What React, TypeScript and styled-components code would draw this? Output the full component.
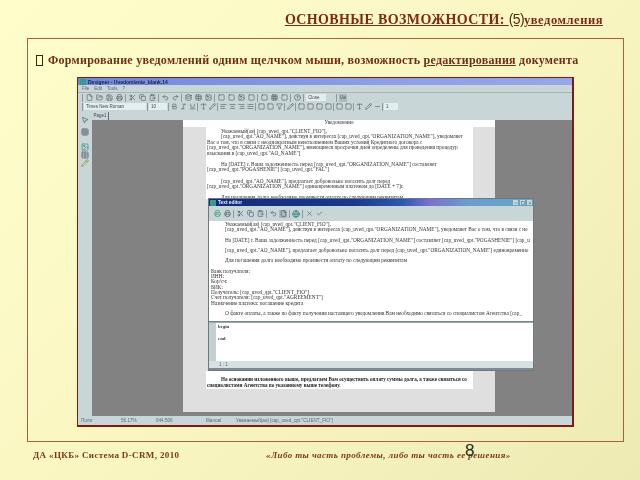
import React from "react";
import styled, { createGlobalStyle } from "styled-components";
import {
  File, FolderOpen, Save, Printer, Scissors, Copy, ClipboardPaste, Undo2, Redo2, Database, Table, Image,
  Grid3x3, Filter, Bold, Italic, Underline, AlignLeft, AlignCenter, AlignRight, AlignJustify, Pencil, Type,
  MousePointer2, Square, Globe, X, Check, Minus, HelpCircle,
} from "lucide-react";

const Global = createGlobalStyle`
  html, body { margin: 0; padding: 0; width: 640px; height: 480px; overflow: hidden; }
`;

const Slide = styled.div`
  position: relative;
  width: 640px;
  height: 480px;
  display: flex;
  flex-direction: column;
  overflow: hidden;
  background: linear-gradient(135deg, #fffecb 0%, #f9f6c2 50%, #eeeab4 100%);
  font-family: "Liberation Serif", serif;
`;

const Header = styled.header`
  height: 38px;
  box-sizing: border-box;
  padding: 11px 37px 0 0;
  display: flex;
  justify-content: flex-end;
  align-items: flex-start;
`;

const Title = styled.h1`
  margin: 0;
  font-size: 14px;
  line-height: 16px;
  font-weight: bold;
  color: #7c2a16;
  text-decoration: underline;
  white-space: nowrap;
  letter-spacing: 0.38px;
  filter: blur(0.3px);
`;

const TitleNum = styled.span`
  font-family: "Liberation Sans", sans-serif;
  font-size: 14px;
  font-weight: normal;
  letter-spacing: -0.6px;
  color: #4c3010;
`;

const TitleSmall = styled.span`
  font-size: 12.5px;
  letter-spacing: 0.55px;
`;

const Frame = styled.section`
  width: 597px;
  height: 404px;
  margin-left: 27px;
  box-sizing: border-box;
  border: 1px solid #a8613f;
  padding: 14px 0 0 8px;
`;

const Lead = styled.p`
  margin: 0;
  height: 24px;
  display: flex;
  align-items: flex-start;
  gap: 5px;
  font-size: 12px;
  line-height: 14px;
  font-weight: bold;
  color: #6d3015;
  white-space: nowrap;
  letter-spacing: 0.25px;
  filter: blur(0.25px);
`;

const Bullet = styled.span`
  width: 5px;
  height: 9px;
  margin-top: 2px;
  border: 1px solid #3b2408;
  flex: none;
`;

const Edit = styled.span`
  text-decoration: underline;
`;

const Shot = styled.div`
  position: relative;
  width: 497px;
  height: 350px;
  margin-left: 41px;
  box-sizing: border-box;
  border: 1px solid #7c1d12;
  border-width: 1px 2px 2px 1px;
  background: #c9d6d8;
  display: flex;
  flex-direction: column;
  overflow: hidden;
  font-family: "Liberation Sans", sans-serif;
  filter: blur(0.45px);
`;

const WinTitle = styled.div`
  height: 7px;
  flex: none;
  background: linear-gradient(90deg, #6f86dd, #8d9ee8 60%, #97a6ea);
  display: flex;
  align-items: center;
  gap: 2px;
  padding-left: 2px;
  font-size: 5px;
  font-weight: bold;
  color: #1c2440;
`;

const AppIcon = styled.span`
  width: 6px;
  height: 6px;
  background: #3c9a8c;
`;

const MenuBar = styled.div`
  height: 8px;
  box-sizing: border-box;
  flex: none;
  display: flex;
  align-items: center;
  gap: 5px;
  padding-left: 4px;
  font-size: 4.5px;
  color: #667;
  border-bottom: 1px solid #a9b6b8;
`;

const ToolRow = styled.div<{ $tight?: boolean }>`
  height: 9px;
  box-sizing: border-box;
  flex: none;
  padding-left: 4px;
  display: flex;
  align-items: center;
  gap: ${(p) => (p.$tight ? 1 : 2)}px;
  color: #4b5560;
  font-size: 4.5px;
`;

const Sep = styled.span`
  width: 1px;
  height: 8px;
  background: #8d999c;
  flex: none;
`;

const ToolBtn = styled.span<{ $active?: boolean }>`
  height: 8px;
  width: 8px;
  flex: none;
  display: inline-flex;
  align-items: center;
  justify-content: center;
  background: ${(p) => (p.$active ? "#aeb9bc" : "transparent")};
`;

const Combo = styled.span<{ $w: number }>`
  width: ${(p) => p.$w}px;
  height: 7px;
  flex: none;
  padding-left: 2px;
  box-sizing: border-box;
  background: #e4edef;
  display: inline-flex;
  align-items: center;
  font-size: 4.5px;
  color: #445;
`;

const Work = styled.div`
  flex: 1;
  min-height: 0;
  display: flex;
`;

const SideTools = styled.div`
  width: 14px;
  flex: none;
  box-sizing: border-box;
  padding: 5px 1px;
  display: flex;
  flex-direction: column;
  align-items: center;
  color: #556;
`;

const SideGap = styled.span<{ $h: number }>`
  height: ${(p) => p.$h}px;
  flex: none;
`;

const Desk = styled.div`
  flex: 1;
  min-width: 0;
  display: flex;
  flex-direction: column;
`;

const TabRow = styled.div`
  height: 9px;
  flex: none;
  display: flex;
  align-items: flex-end;
  font-size: 4.5px;
  color: #445;
`;

const Tab = styled.span`
  height: 8px;
  width: 17px;
  box-sizing: border-box;
  padding-top: 1px;
  text-align: center;
  border-right: 1px solid #667;
`;

const Canvas = styled.div`
  flex: 1;
  min-height: 0;
  background: #828282;
  padding-left: 91px;
  display: flex;
  align-items: flex-start;
`;

const Page = styled.div`
  width: 312px;
  height: 292px;
  background: #dfdfdf;
  display: flex;
  flex-direction: column;
`;

const PageHead = styled.div`
  height: 7px;
  flex: none;
  box-sizing: border-box;
  background: #fff;
  text-align: center;
  font-size: 5.2px;
  line-height: 5px;
  color: #333;
  font-family: "Liberation Serif", serif;
`;

const DocBox = styled.div`
  width: 267px;
  height: 72px;
  flex: none;
  margin-left: 23px;
  background: #fff;
  box-sizing: border-box;
  padding: 2px 0 0 1px;
  font-family: "Liberation Serif", serif;
  font-size: 5.3px;
  line-height: 5.4px;
  color: #333;
  white-space: nowrap;
`;

const DocLine = styled.div<{ $indent?: number; $gap?: number }>`
  padding-left: ${(p) => p.$indent ?? 0}px;
  margin-top: ${(p) => p.$gap ?? 0}px;
`;

const Spacer = styled.div`
  height: 172px;
  flex: none;
`;

const NoteBox = styled.div`
  width: 267px;
  height: 18px;
  flex: none;
  margin-left: 23px;
  background: #fff;
  box-sizing: border-box;
  padding: 5px 0 0 1px;
  font-family: "Liberation Serif", serif;
  font-size: 5.1px;
  line-height: 6px;
  font-weight: bold;
  color: #222;
  white-space: nowrap;
`;

const StatusBar = styled.div`
  height: 9px;
  flex: none;
  padding-left: 3px;
  display: flex;
  align-items: center;
  font-size: 4.6px;
  color: #5a6a80;
  white-space: nowrap;
`;

const Cell = styled.span<{ $w: number }>`
  width: ${(p) => p.$w}px;
  flex: none;
`;

/* Floating "Text editor" window above the designer page */
const Dialog = styled.div`
  position: absolute;
  left: 130px;
  top: 120px;
  width: 326px;
  height: 173px;
  box-sizing: border-box;
  border: 1px solid #6d7a7d;
  background: #c9d6d8;
  display: flex;
  flex-direction: column;
`;

const DlgTitle = styled.div`
  height: 7px;
  flex: none;
  display: flex;
  align-items: center;
  gap: 2px;
  padding: 0 1px;
  background: linear-gradient(90deg, #0f2a80 0%, #1a3a8c 45%, #2c58b5 60%, #7a70d0 68%, #6a9dd0 80%, #62a7c8 100%);
  color: #e8eefc;
  font-size: 4.8px;
  font-weight: bold;
`;

const DlgName = styled.span`
  flex: 1;
`;

const DlgBtn = styled.span`
  width: 5px;
  height: 5px;
  display: inline-flex;
  align-items: center;
  justify-content: center;
  background: #c9d6d8;
  color: #223;
`;

const DlgTools = styled.div`
  height: 15px;
  flex: none;
  padding-left: 4px;
  display: flex;
  align-items: center;
  gap: 2px;
  color: #3e5560;
`;

const DlgBody = styled.div`
  height: 101px;
  flex: none;
  background: #fff;
  box-sizing: border-box;
  padding: 1px 0 0 2px;
  font-family: "Liberation Serif", serif;
  font-size: 5.3px;
  line-height: 5.35px;
  color: #333;
  white-space: nowrap;
  border-bottom: 1px solid #788;
`;

const Code = styled.div`
  flex: 1;
  display: flex;
  border-top: 1px solid #9aa;
  min-height: 0;
`;

const Gutter = styled.div`
  width: 7px;
  flex: none;
  background: #c3d0d2;
`;

const CodeText = styled.div`
  flex: 1;
  background: #fff;
  padding: 1px 0 0 2px;
  font-family: "Liberation Serif", serif;
  font-size: 4.8px;
  line-height: 5.5px;
  font-weight: bold;
  color: #334;
`;

const CodeLine = styled.div<{ $gap?: boolean }>`
  margin-top: ${(p) => (p.$gap ? 6 : 0)}px;
`;

const DlgStatus = styled.div`
  height: 7px;
  flex: none;
  padding-left: 10px;
  background: #d5e1e3;
  font-size: 4.5px;
  line-height: 7px;
  color: #667;
  border-bottom: 2px solid #7f8b8e;
`;

const Footer = styled.footer`
  flex: 1;
  display: flex;
  align-items: flex-start;
  padding: 7px 0 0 33px;
  font-size: 9px;
  line-height: 12px;
  font-weight: bold;
  color: #7c3a1a;
  white-space: nowrap;
  filter: blur(0.25px);
`;

const Org = styled.span`
  width: 233px;
  letter-spacing: 0.37px;
  flex: none;
`;

const Motto = styled.span`
  font-style: italic;
  letter-spacing: 0.4px;
`;

const PageNo = styled.span`
  position: absolute;
  left: 465px;
  top: 441px;
  font-family: "Liberation Sans", sans-serif;
  font-size: 17px;
  line-height: 19px;
  color: #2c2c20;
`;

const S = 7;
const tools1 = [
  [File, FolderOpen, Save, Printer],
  [Scissors, Copy, ClipboardPaste],
  [Undo2, Redo2],
  [Database, Table, Image],
  [Square, Square, Image, Square],
  [Square, Grid3x3, Square],
];
const tools2 = [
  [Bold, Italic, Underline],
  [Type, Pencil],
  [AlignLeft, AlignCenter, AlignRight, AlignJustify],
  [Square, Square, Filter],
  [Pencil],
  [Square, Square, Square, Square],
  [Square, Square],
  [Type, Pencil, Minus],
];

const Icons = ({ groups }: { groups: (typeof File)[][] }) => (
  <>
    {groups.map((g, i) => (
      <React.Fragment key={i}>
        {g.map((I, j) => (
          <ToolBtn key={j}>
            <I size={S} strokeWidth={2} />
          </ToolBtn>
        ))}
        <Sep />
      </React.Fragment>
    ))}
  </>
);

export default function App() {
  return (
    <Slide>
      <Global />
      <Header>
        <Title>
          ОСНОВНЫЕ ВОЗМОЖНОСТИ: <TitleNum>(5)</TitleNum>
          <TitleSmall>уведомления</TitleSmall>
        </Title>
      </Header>
      <Frame>
        <Lead>
          <Bullet />
          <span>
            Формирование уведомлений одним щелчком мыши, возможность <Edit>редактирования</Edit> документа
          </span>
        </Lead>
        <Shot>
          <WinTitle>
            <AppIcon />
            Designer - Uvedomlenie_blank.14
          </WinTitle>
          <MenuBar>
            <span>File</span>
            <span>Edit</span>
            <span>Tools</span>
            <span>?</span>
          </MenuBar>
          <ToolRow>
            <Sep />
            <Icons groups={tools1} />
            <ToolBtn>
              <HelpCircle size={S} />
            </ToolBtn>
            <Sep />
            <Combo $w={20}>Close</Combo>
            <Cell $w={6} />
            <Sep />
            <ToolBtn $active>Ua</ToolBtn>
          </ToolRow>
          <ToolRow $tight>
            <Sep />
            <Combo $w={62}>Times New Roman</Combo>
            <Sep />
            <Combo $w={18}>10</Combo>
            <Sep />
            <Icons groups={tools2} />
            <Combo $w={14}>1</Combo>
          </ToolRow>
          <Work>
            <SideTools>
              <MousePointer2 size={8} />
              <SideGap $h={4} />
              <Grid3x3 size={8} />
              <SideGap $h={7} />
              <Image size={8} color="#2f8f7a" />
              <Table size={8} />
              <Pencil size={8} color="#9a8a20" />
            </SideTools>
            <Desk>
              <TabRow>
                <Tab>Page1</Tab>
              </TabRow>
              <Canvas>
                <Page>
                  <PageHead>Уведомление</PageHead>
                  <DocBox>
                    <DocLine $indent={14}>Уважаемый(ая) [cap_uved_qpt."CLIENT_FIO"],</DocLine>
                    <DocLine $indent={14}>[cap_uved_qpt."AO_NAME"], действуя в интересах [cap_uved_qpt."ORGANIZATION_NAME"], уведомляет</DocLine>
                    <DocLine>Вас о том, что в связи с неоднократным неисполнением Ваших условий Кредитного договора с</DocLine>
                    <DocLine>[cap_uved_qpt."ORGANIZATION_NAME"], имеющиеся просрочки дней определены для проведения процедур</DocLine>
                    <DocLine>взыскания в [cap_uved_qpt."AO_NAME"]</DocLine>
                    <DocLine $indent={14} $gap={6}>На [DATE] г. Ваша задолженность перед [cap_uved_qpt."ORGANIZATION_NAME"] составляет</DocLine>
                    <DocLine>[cap_uved_qpt."POGASHENIE"] [cap_uved_qpt."FAL"]</DocLine>
                    <DocLine $indent={14} $gap={6}>[cap_uved_qpt."AO_NAME"], предлагает добровольно погасить долг перед</DocLine>
                    <DocLine>[cap_uved_qpt."ORGANIZATION_NAME"] единовременным платежом до [DATE + 7]г.</DocLine>
                    <DocLine $indent={14} $gap={5}>Для погашения долга необходимо произвести оплату по следующим реквизитам</DocLine>
                  </DocBox>
                  <Spacer />
                  <NoteBox>
                    <DocLine $indent={14}>На основании изложенного выше, предлагаем Вам осуществить оплату суммы долга, а также связаться со</DocLine>
                    <DocLine>специалистами Агентства по указанному выше телефону.</DocLine>
                  </NoteBox>
                </Page>
              </Canvas>
            </Desk>
          </Work>
          <StatusBar>
            <Cell $w={40}>Поля</Cell>
            <Cell $w={35}>56.17%</Cell>
            <Cell $w={50}>644:506</Cell>
            <Cell $w={30}>Manual</Cell>
            <Cell $w={120}>Уважаемый(ая) [cap_uved_qpt."CLIENT_FIO"]</Cell>
          </StatusBar>
          <Dialog>
            <DlgTitle>
              <AppIcon />
              <DlgName>Text editor</DlgName>
              <DlgBtn>
                <Minus size={4} />
              </DlgBtn>
              <DlgBtn>
                <Square size={4} />
              </DlgBtn>
              <DlgBtn>
                <X size={4} />
              </DlgBtn>
            </DlgTitle>
            <DlgTools>
              <ToolBtn><Printer size={7} color="#2f8f7a" /></ToolBtn>
              <ToolBtn><Printer size={7} /></ToolBtn>
              <Sep />
              <ToolBtn><Scissors size={7} /></ToolBtn>
              <ToolBtn><Copy size={7} /></ToolBtn>
              <ToolBtn><ClipboardPaste size={7} /></ToolBtn>
              <Sep />
              <ToolBtn><Undo2 size={7} /></ToolBtn>
              <ToolBtn $active><File size={7} /></ToolBtn>
              <Sep />
              <ToolBtn><Globe size={8} color="#14746a" /></ToolBtn>
              <Sep />
              <ToolBtn><X size={7} /></ToolBtn>
              <ToolBtn><Check size={7} /></ToolBtn>
            </DlgTools>
            <DlgBody>
              <DocLine $indent={14}>Уважаемый(ая) [cap_uved_qpt."CLIENT_FIO"],</DocLine>
              <DocLine $indent={14}>[cap_uved_qpt."AO_NAME"], действуя в интересах [cap_uved_qpt."ORGANIZATION_NAME"], уведомляет Вас о том, что в связи с не</DocLine>
              <DocLine $indent={14} $gap={5}>На [DATE] г. Ваша задолженность перед [cap_uved_qpt."ORGANIZATION_NAME"] составляет [cap_uved_qpt."POGASHENIE"] [cap_u</DocLine>
              <DocLine $indent={14} $gap={5}>[cap_uved_qpt."AO_NAME"], предлагает добровольно погасить долг перед [cap_uved_qpt."ORGANIZATION_NAME"] единовременно</DocLine>
              <DocLine $indent={14} $gap={5}>Для погашения долга необходимо произвести оплату по следующим реквизитам</DocLine>
              <DocLine $gap={5}>Банк получателя:</DocLine>
              <DocLine>ИНН:</DocLine>
              <DocLine>Кор/сч:</DocLine>
              <DocLine>БИК:</DocLine>
              <DocLine>Получатель: [cap_uved_qpt."CLIENT_FIO"]</DocLine>
              <DocLine>Счет получателя: [cap_uved_qpt."AGREEMENT"]</DocLine>
              <DocLine>Назначение платежа: погашение кредита</DocLine>
              <DocLine $indent={14} $gap={5}>О факте оплаты, а также по факту получения настоящего уведомления Вам необходимо связаться со  специалистом Агентства  [cap_</DocLine>
            </DlgBody>
            <Code>
              <Gutter />
              <CodeText>
                <CodeLine>begin</CodeLine>
                <CodeLine $gap>end</CodeLine>
              </CodeText>
            </Code>
            <DlgStatus>1 : 1</DlgStatus>
          </Dialog>
        </Shot>
      </Frame>
      <Footer>
        <Org>ДА «ЦКБ» Система D-CRM, 2010</Org>
        <Motto>«Либо ты часть проблемы, либо ты часть ее решения»</Motto>
      </Footer>
      <PageNo>8</PageNo>
    </Slide>
  );
}
